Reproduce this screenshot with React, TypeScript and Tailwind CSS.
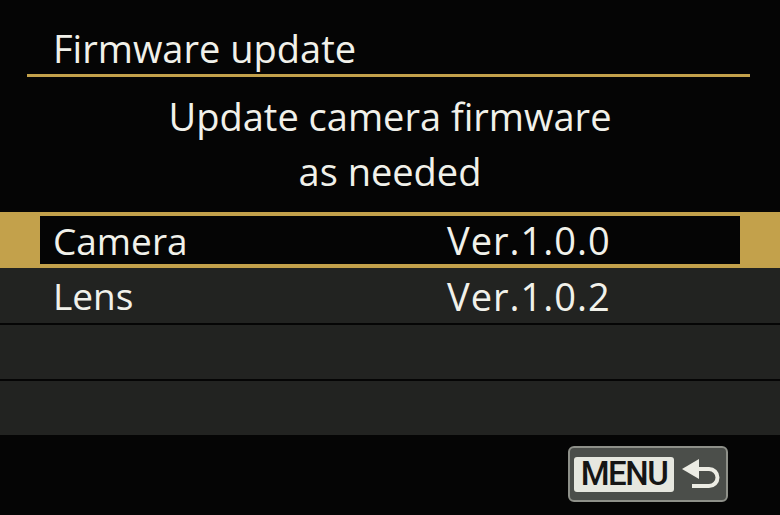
const sans = "font-['Open_Sans','Noto_Sans',sans-serif]";

function ReturnArrow() {
  return (
    <svg width="40" height="30" viewBox="0 0 40 30" fill="none" aria-hidden="true">
      <path d="M0 10 L17 0 L17 20 Z" fill="#ecece4" />
      <path
        d="M14 10 H27 a8.5 8.5 0 0 1 0 17 H10"
        stroke="#ecece4"
        strokeWidth="4"
        fill="none"
      />
    </svg>
  );
}

export default function App() {
  const rows = [
    { name: "Camera", ver: "Ver.1.0.0", active: true },
    { name: "Lens", ver: "Ver.1.0.2", active: false },
  ];

  return (
    <div className={`flex h-[515px] w-[780px] flex-col overflow-hidden bg-[#050505] text-[#f1f1ea] ${sans}`}>
      <div className="mx-[27px] mr-[30px] h-[77px] border-b-[3px] border-[#c3a14b] pl-[26px] pt-[26px] text-[38px] leading-[44px]">
        Firmware update
      </div>

      <div className="mt-[12px] text-center text-[38px] leading-[55px]">
        <p>Update camera firmware</p>
        <p>as needed</p>
      </div>

      <div className="mt-[13px] flex flex-col">
        {rows.map((r) =>
          r.active ? (
            <div key={r.name} className="h-[56px] bg-[#c3a14b] px-[40px] py-[4px]">
              <div className="flex h-full items-center bg-[#050505] pl-[13px] text-[37px] leading-none">
                <span className="w-[394px]">{r.name}</span>
                <span className="text-[38px] tracking-[1px]">{r.ver}</span>
              </div>
            </div>
          ) : (
            <div
              key={r.name}
              className="flex h-[55px] items-center bg-[#222321] pl-[53px] text-[37px] leading-none"
            >
              <span className="w-[394px]">{r.name}</span>
              <span className="text-[38px] tracking-[1px]">{r.ver}</span>
            </div>
          ),
        )}
        <div className="mt-[2px] h-[54px] bg-[#222321]" />
        <div className="mt-[2px] h-[54px] bg-[#222321]" />
      </div>

      <div className="flex justify-end pr-[52px] pt-[11px]">
        <div className="flex h-[56px] w-[160px] items-center gap-[8px] rounded-[6px] border-2 border-[#8e9089] bg-[#4b4e4a] pl-[4px]">
          <div className="flex h-[35px] w-[100px] items-center justify-center rounded-[3px] bg-[#e6e7df] font-['Roboto',sans-serif] text-[33px] font-medium tracking-[-1.5px] text-[#151515]">
            MENU
          </div>
          <ReturnArrow />
        </div>
      </div>
    </div>
  );
}
